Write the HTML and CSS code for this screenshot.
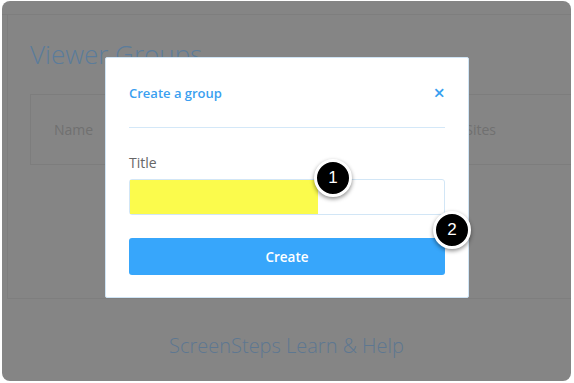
FILE: index.html
```html
<!DOCTYPE html>
<html>
<head>
<meta name="viewport" content="width=device-width, initial-scale=1">
<link rel="stylesheet" href="styles.css">
</head>
<body>

<div class="screen">
  <div class="topbar"></div>

  <div class="page">
    <h1 class="page-title">Viewer Groups</h1>
    <div class="table">
      <span class="col col-name">Name</span>
      <span class="col col-sites">Sites</span>
    </div>
  </div>

  <div class="footer">ScreenSteps Learn &amp; Help</div>

  <!-- modal sits over the dimmed page -->
  <div class="modal">
    <div class="modal-head">
      <span class="modal-title">Create a group</span>
      <span class="modal-close">&times;</span>
    </div>
    <label class="field-label" for="title">Title</label>
    <div class="field">
      <span class="highlight"></span>
      <input type="text" id="title" name="title">
    </div>
    <button type="button" class="create-btn">Create</button>
  </div>

  <span class="step step-1">1</span>
  <span class="step step-2">2</span>
</div>

</body>
</html>
```

FILE: styles.css
```css
body {
    margin: 0;
    background: #fff;
    font-family: "Open Sans", "Liberation Sans", sans-serif;
}

.screen {
    position: relative;
    margin: 1px 3px 2px 2px;
    height: 380px;
    background-color: #858585;
    border-radius: 8px;
    overflow: hidden;
}

.topbar {
    height: 13px;
    border-bottom: 1px solid #7e7e7e;
}

.page {
    margin-left: 5px;
    height: 283px;
    border-left: 1px solid #7e7e7e;
    border-bottom: 1px solid #7e7e7e;
    padding: 0 0 0 22px;
}

.page-title {
    margin: 0;
    padding-top: 22px;
    height: 57px;
    box-sizing: border-box;
    font-family: "Open Sans", sans-serif;
    font-weight: 300;
    font-size: 26px;
    line-height: 34px;
    color: #5b7c9b;
}

.table {
    display: flex;
    align-items: center;
    margin-top: 22px;
    height: 69px;
    border: 1px solid #7d7d7d;
    border-right: none;
    font-size: 14px;
    color: #707070;
}

.col-name {
    margin-left: 23px;
}

.col-sites {
    margin-left: auto;
    margin-right: 75px;
}

.footer {
    text-align: center;
    padding-top: 33px;
    font-family: "Open Sans", sans-serif;
    font-weight: 300;
    font-size: 20px;
    color: #5d7791;
}

.modal {
    position: absolute;
    left: 103px;
    top: 56px;
    width: 364px;
    height: 241px;
    box-sizing: border-box;
    background: #fff;
    border: 1px solid #cfe4f5;
    border-radius: 2px;
    padding: 0 23px;
}

.modal-head {
    display: flex;
    justify-content: space-between;
    align-items: center;
    height: 69px;
    border-bottom: 1px solid #d4e8f8;
}

.modal-title {
    font-size: 13px;
    font-weight: 600;
    color: #3a9ff0;
}

.modal-close {
    font-size: 20px;
    font-weight: 600;
    color: #3a9ff0;
}

.field-label {
    display: block;
    margin-top: 25px;
    font-size: 14px;
    color: #666;
}

.field {
    position: relative;
    margin-top: 7px;
    height: 36px;
}

.field input {
    width: 100%;
    height: 36px;
    box-sizing: border-box;
    border: 1px solid #d2e6f6;
    border-radius: 3px;
    background: #fff;
}

.highlight {
    position: absolute;
    left: 1px;
    top: 1px;
    width: 188px;
    height: 34px;
    background: #fbfb4c;
}

.create-btn {
    display: block;
    width: 100%;
    height: 37px;
    margin-top: 23px;
    border: none;
    border-radius: 3px;
    background-color: #37a6fb;
    color: #fff;
    font-family: "Open Sans", sans-serif;
    font-size: 13.5px;
    font-weight: 600;
}

.step {
    position: absolute;
    width: 32px;
    height: 32px;
    border: 3px solid #fff;
    border-radius: 50%;
    background: #000;
    color: #fff;
    font-family: "Liberation Sans", sans-serif;
    font-size: 17px;
    line-height: 32px;
    text-align: center;
    box-shadow: 0 2px 4px rgba(0, 0, 0, 0.45);
}

.step-1 {
    left: 312px;
    top: 158px;
}

.step-2 {
    left: 431px;
    top: 210px;
}
```
